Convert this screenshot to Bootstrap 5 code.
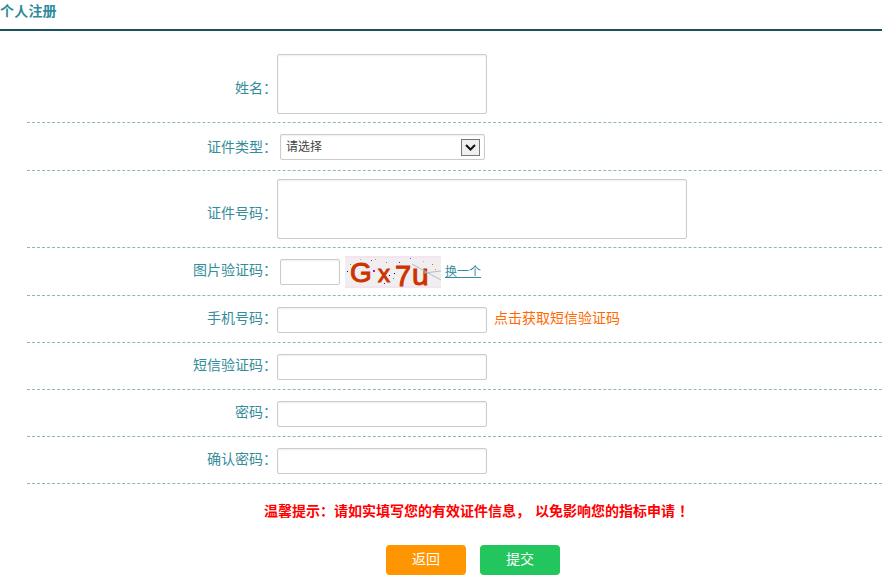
<!DOCTYPE html>
<html lang="zh">
<head>
<meta charset="utf-8">
<title>个人注册</title>
<link rel="stylesheet" href="https://cdn.jsdelivr.net/npm/bootstrap@5.3.0/dist/css/bootstrap.min.css">
<style>
body{font-family:"Noto Sans CJK SC","Liberation Sans",sans-serif;font-size:14px;background:#fff;overflow:hidden}
.reg-title{height:31px;border-bottom:2px solid #1a5060;color:#2f8a9b;font-weight:700;line-height:20px;font-size:14px;letter-spacing:.2px}
.reg-form{margin-left:27px}
.reg-row{border-bottom:1px dashed #8fb8b4;padding:11px 0 9px}
.reg-row.first{padding:23px 0 8px}
.reg-row.sel{padding:11px 0 10px}
.reg-row.area{padding:8px 0 8px}
.reg-row.cap{padding:9px 0 8px}
.reg-label{width:250px;text-align:right;color:#358c9b;line-height:20px;flex:none;margin-bottom:6px}
.reg-row.first .reg-label,.reg-row.area .reg-label{margin:6px 0 0}
.reg-row.sel .reg-label{margin-bottom:2px}
.reg-field{display:flex;align-items:center}
.reg-input{width:210px;height:26px;border:1px solid #ccc;border-radius:2px;box-shadow:inset 0 1px 2px #eee}
.reg-input.tall{height:60px}
.reg-input.wide{width:410px;height:60px}
.reg-input.short{width:60px;margin-left:3px}
.reg-select{width:205px;height:26px;margin-left:3px;border:1px solid #ccc;border-radius:2px;box-shadow:inset 0 1px 2px #eee;display:flex;align-items:center;justify-content:space-between;padding:0 4px 0 5px;font-size:12px;color:#444}
.reg-select-text{padding-bottom:2px}
.reg-arrow{width:19px;height:17px;border:1px solid #777;background:#f0f0f0;display:flex;align-items:center;justify-content:center}
.reg-captcha{margin-left:5px;display:block;overflow:visible}
.reg-link{margin:0 0 2px 4px;font-size:12px;color:#358c9b}
.reg-sms{margin:0 0 6px 7px;color:#ff6a00;line-height:20px}
.reg-tip{color:#f00;font-weight:700;margin:16px 0 0 264px;line-height:20px;white-space:nowrap}
.reg-comma{margin-right:5px}
.reg-bang{margin-left:4px}
.reg-btns{margin:25px 0 0 386px;gap:14px}
.reg-btn{width:80px;height:30px;border:0;border-radius:4px;color:#fff;padding:0 0 3px;font-size:14px}
.reg-back{background:#ff9500}
.reg-submit{background:#22c55e}
</style>
</head>
<body>
<div class="reg-title">个人注册</div>
<form class="reg-form">
  <div class="reg-row first d-flex align-items-center">
    <div class="reg-label">姓名：</div>
    <div class="reg-field"><div class="reg-input tall"></div></div>
  </div>
  <div class="reg-row sel d-flex align-items-center">
    <div class="reg-label">证件类型：</div>
    <div class="reg-field"><div class="reg-select"><span class="reg-select-text">请选择</span><span class="reg-arrow"><svg width="11" height="7" viewBox="0 0 11 7"><path d="M1 1l4.5 4.5L10 1" fill="none" stroke="#111" stroke-width="2"/></svg></span></div></div>
  </div>
  <div class="reg-row area d-flex align-items-center">
    <div class="reg-label">证件号码：</div>
    <div class="reg-field"><div class="reg-input wide"></div></div>
  </div>
  <div class="reg-row cap d-flex align-items-center">
    <div class="reg-label">图片验证码：</div>
    <div class="reg-field">
      <div class="reg-input short"></div>
      <svg class="reg-captcha" width="96" height="30" viewBox="0 0 96 30">
        <rect width="96" height="30" fill="#f0eeee"/>
        <path d="M0 0h96M0 30h96" stroke="#f5e3f0" stroke-width="2"/>
        <g font-family="Liberation Sans" fill="#cc3300" stroke="#cc3300" stroke-width="1">
          <text x="5" y="25" font-size="28">G</text>
          <text x="33" y="25" font-size="24">x</text>
          <text x="50" y="29" font-size="29">7</text>
          <text x="67" y="28" font-size="30">u</text>
        </g>
        <path d="M67 7L96 23M79 16l17-2" stroke="#b0bcc8" stroke-width="1" fill="none"/>
        <g>
          <rect x="5" y="7" width="1" height="1" fill="#596"/><rect x="2" y="14" width="1" height="1" fill="#00c"/>
          <rect x="30" y="2" width="1" height="1" fill="#aa5"/><rect x="28" y="13" width="2" height="2" fill="#d0c"/>
          <rect x="49" y="16" width="1" height="1" fill="#000"/><rect x="54" y="5" width="1" height="1" fill="#22d"/>
          <rect x="48" y="21" width="1" height="1" fill="#2a9"/><rect x="39" y="26" width="1" height="1" fill="#80a"/>
          <rect x="65" y="1" width="1" height="1" fill="#18e"/><rect x="87" y="7" width="1" height="1" fill="#e52"/>
          <rect x="78" y="4" width="1" height="1" fill="#da8"/><rect x="15" y="2" width="1" height="1" fill="#7d5"/>
          <rect x="41" y="5" width="1" height="1" fill="#2a8"/><rect x="44" y="18" width="1" height="1" fill="#000"/>
          <rect x="90" y="12" width="1" height="1" fill="#e82"/><rect x="26" y="3" width="1" height="1" fill="#44d"/>
        </g>
      </svg>
      <a href="#" class="reg-link">换一个</a>
    </div>
  </div>
  <div class="reg-row d-flex align-items-center">
    <div class="reg-label">手机号码：</div>
    <div class="reg-field"><div class="reg-input"></div><span class="reg-sms">点击获取短信验证码</span></div>
  </div>
  <div class="reg-row d-flex align-items-center">
    <div class="reg-label">短信验证码：</div>
    <div class="reg-field"><div class="reg-input"></div></div>
  </div>
  <div class="reg-row d-flex align-items-center">
    <div class="reg-label">密码：</div>
    <div class="reg-field"><div class="reg-input"></div></div>
  </div>
  <div class="reg-row d-flex align-items-center">
    <div class="reg-label">确认密码：</div>
    <div class="reg-field"><div class="reg-input"></div></div>
  </div>
</form>
<div class="reg-tip">温馨提示：请如实填写您的有效证件信息<span class="reg-comma">，</span>以免影响您的指标申请<span class="reg-bang">！</span></div>
<div class="reg-btns d-flex">
  <button type="button" class="reg-btn reg-back">返回</button>
  <button type="button" class="reg-btn reg-submit">提交</button>
</div>
<script src="https://cdn.jsdelivr.net/npm/bootstrap@5.3.0/dist/js/bootstrap.bundle.min.js"></script>
</body>
</html>
